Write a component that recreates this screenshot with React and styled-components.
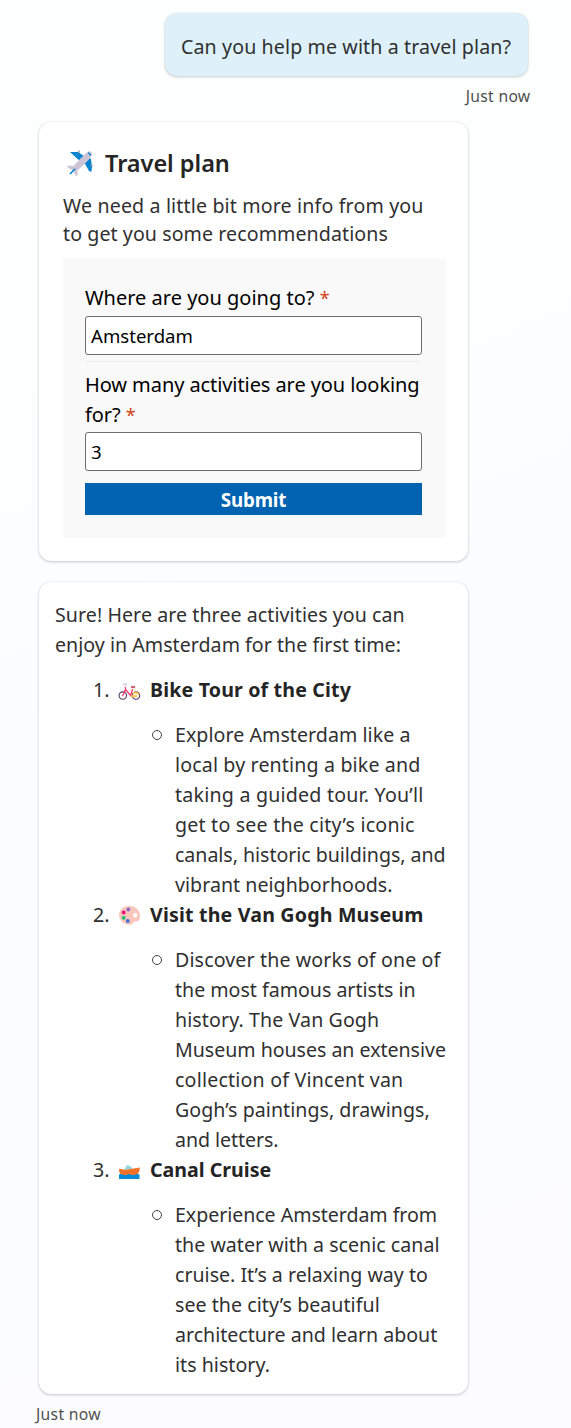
import React from "react";
import styled, { createGlobalStyle } from "styled-components";

const GlobalStyle = createGlobalStyle`
  *, *::before, *::after { box-sizing: border-box; }
  body {
    margin: 0;
    font-family: "Noto Sans", "Open Sans", sans-serif;
    color: #303030;
  }
`;

const Chat = styled.main`
  width: 571px;
  height: 1428px;
  overflow: hidden;
  padding: 13px 0 0 39px;
  display: flex;
  flex-direction: column;
  align-items: flex-start;
  background: linear-gradient(160deg, #fdfffe 0%, #fdfefe 22%, #fbfcfe 50%, #fcfcff 100%);
`;

const Bubble = styled.div`
  align-self: flex-end;
  width: 363px;
  height: 63px;
  margin-right: 43.5px;
  padding: 19px 0 0 16.5px;
  border-radius: 12px;
  background: #def1fb;
  box-shadow: 0 1px 3px rgba(0, 0, 0, 0.2), 0 0 1px rgba(0, 0, 0, 0.12);
`;

const Line = styled.span`
  display: block;
  white-space: nowrap;
  font-size: ${(p) => p.$size || 19.6}px;
  line-height: ${(p) => p.$lh || 30}px;
  letter-spacing: ${(p) => p.$ls || 0}px;
`;

const Timestamp = styled.time`
  font-size: 15.7px;
  line-height: 22px;
  letter-spacing: 0.3px;
  color: #505050;
  white-space: nowrap;
`;

const SentTime = styled(Timestamp)`
  align-self: flex-end;
  margin: 9px 40.5px 15px 0;
`;

const ReceivedTime = styled(Timestamp)`
  margin: 9px 0 0 -3px;
`;

const Card = styled.section`
  width: 429px;
  border-radius: 12px;
  background: #fff;
  box-shadow: 0 1px 3px rgba(0, 0, 0, 0.2), 0 0 1px rgba(0, 0, 0, 0.16);
`;

const FormCard = styled(Card)`
  height: 439px;
  padding: 24px 24px 0 24px;
`;

const AnswerCard = styled(Card)`
  height: 812px;
  margin-top: 21px;
  padding: 18px 0 0 16px;
`;

const CardTitle = styled.h2`
  display: flex;
  align-items: center;
  gap: 12px;
  height: 35px;
  margin: 0 0 11px;
  padding-left: 4px;
  font-size: 23.5px;
  font-weight: 600;
  line-height: 35px;
  letter-spacing: -0.03px;
  color: #242424;
`;

const Panel = styled.form`
  width: 382px;
  height: 279px;
  margin-top: 11px;
  padding: 24px 23px 0 22px;
  background: #f9f9f9;
`;

const Field = styled.label`
  display: block;
  color: #000;
`;

const Required = styled.span`
  color: #d13f17;
  font-size: 18px;
`;

const Input = styled.input`
  display: block;
  width: 337px;
  height: 39px;
  margin-top: ${(p) => p.$gap}px;
  padding: 0 5px 1px;
  border: 1px solid #6e6e6e;
  border-radius: 3px;
  background: #fff;
  color: #000;
  font-family: inherit;
  font-size: 18.6px;
  outline: none;
`;

const Divider = styled.div`
  height: 1px;
  margin: 6px 0 8px;
  background: #f0f0f0;
`;

const Submit = styled.button`
  display: block;
  width: 337px;
  height: 32px;
  margin-top: 12px;
  padding: 2px 0 0;
  border: 0;
  background: #0063b1;
  color: #fff;
  font-family: inherit;
  font-size: 18.8px;
  font-weight: 700;
  line-height: 30px;
  letter-spacing: -0.15px;
`;

const Activities = styled.ol`
  margin: 15px 0 0;
  padding: 0;
  list-style: none;
`;

const ActivityHead = styled.div`
  display: flex;
  align-items: center;
  height: 30px;
  padding-left: 38px;
  margin-bottom: 15px;
`;

const Ordinal = styled.span`
  width: 25px;
  font-size: 19.6px;
  line-height: 30px;
`;

const Name = styled.strong`
  margin-left: 9px;
  font-size: 19.6px;
  line-height: 30px;
  letter-spacing: ${(p) => p.$ls}px;
  white-space: nowrap;
  color: #242424;
`;

const Detail = styled.div`
  display: flex;
  gap: 13px;
  padding-left: 97px;
`;

const Ring = styled.span`
  flex: none;
  width: 10px;
  height: 10px;
  margin-top: 10px;
  border: 1px solid #404040;
  border-radius: 50%;
`;

const Icon = styled.svg`
  flex: none;
  display: block;
`;

const Plane = () => (
  <Icon width="26" height="28" viewBox="0 0 26 28">
    <path d="M3 2 11 2 20 8 15 13ZM24 9l1 8-.7 5-2.3-1-5-9 4-5Z" fill="#0384cf" />
    <path d="M12 2.3v-1M24 15.5h1" stroke="#9b91ab" strokeWidth="1.6" strokeLinecap="round" />
    <path d="M20.5 2C22.5.5 25 1.3 25 3.8 25 7 20.5 11.5 10.5 20.5L10.5 25 8.8 26 6.5 21 0 17 1.5 15.5 6.5 16C13 9 17.5 4 20.5 2Z" fill="#cdc4d6" />
    <path d="m3.5 23.5 4.2-4.2" stroke="#0384cf" strokeWidth="1.6" strokeLinecap="round" />
    <path d="m21.5 3 2 2" stroke="#0b86cf" strokeWidth="1.4" strokeLinecap="round" />
  </Icon>
);

const Bike = () => (
  <Icon width="23" height="22" viewBox="0 -2 23 22">
    <g fill="none" strokeLinecap="round">
      <circle cx="4.8" cy="14.6" r="3.7" stroke="#533566" strokeWidth="1.1" />
      <circle cx="18" cy="14.6" r="3.7" stroke="#533566" strokeWidth="1.1" />
      <path d="m13.5 15 5 .2M15.5 12l2.5-.5 2.5 1.5" stroke="#fcc550" strokeWidth="2" />
      <path d="M4.8 14.6 7.5 8.5 12.5 14.500 14.5 8.5M7.3 6.5 7.7 9.5" stroke="#f5356f" strokeWidth="1.3" />
      <path d="M5.5 3.5 8 2.5V5" stroke="#cfc5d5" strokeWidth="1.1" />
      <path d="M13.5 6h3" stroke="#b92d3d" strokeWidth="1.5" />
    </g>
  </Icon>
);

const Palette = () => (
  <Icon width="23" height="22" viewBox="0 -0.5 23 22">
    <path fillRule="evenodd" d="M11 1.5C17 1.3 22 5.5 22 11c0 4-1.5 6.500-4 6-2-.3-2.5.8-3.5 2-1.6 2-5 1.4-7.5.2C3.5 17.500 1 14 1 10.5 1 5.5 5.5 1.7 11 1.5ZM17.3 8.5a2.2 2.2 0 1 0 0 4.4 2.2 2.2 0 0 0 0-4.4Z" fill="#fac5ba" />
    <circle cx="10.3" cy="5" r="1.9" fill="#8b6bc4" />
    <circle cx="5.7" cy="8" r="1.9" fill="#f30b78" />
    <circle cx="5.7" cy="13.3" r="1.9" fill="#13c276" />
    <circle cx="9.8" cy="16.5" r="1.9" fill="#3f72dd" />
  </Icon>
);

const Boat = () => (
  <Icon width="23" height="22" viewBox="0 -2 23 22">
    <path d="m6 9 2.5-4.5C10.5 3.7 12.5 5 15 8.5Z" fill="#91d8df" />
    <path d="M1 7.8 7.5 8.800 22 6.5c-.3 3.5-1.5 6-3.5 8.5H3.5C2 13 1 11 1 7.8Z" fill="#ff7426" />
    <path d="M1.5 10.5 8 11.5l13-2" fill="none" stroke="#cf633b" strokeWidth="0.8" />
    <path d="M1 13.5q2-1 4 0t4 0 4 0 4 0 4.5 0V18H1Z" fill="#0789d8" />
  </Icon>
);

const activities = [
  {
    name: "Bike Tour of the City", ls: 0.16, Art: Bike,
    lines: [
      ["Explore Amsterdam like a", 0.05],
      ["local by renting a bike and", 0.15],
      ["taking a guided tour. You’ll", 0.22],
      ["get to see the city’s iconic", 0.21],
      ["canals, historic buildings, and", -0.04],
      ["vibrant neighborhoods.", 0.03],
    ],
  },
  {
    name: "Visit the Van Gogh Museum", ls: 0.18, Art: Palette,
    lines: [
      ["Discover the works of one of", 0.13],
      ["the most famous artists in", -0.01],
      ["history. The Van Gogh", 0.1],
      ["Museum houses an extensive", -0.03],
      ["collection of Vincent van", 0.2],
      ["Gogh’s paintings, drawings,", 0.04],
      ["and letters.", -0.06],
    ],
  },
  {
    name: "Canal Cruise", ls: 0, Art: Boat,
    lines: [
      ["Experience Amsterdam from", -0.05],
      ["the water with a scenic canal", 0.02],
      ["cruise. It’s a relaxing way to", 0],
      ["see the city’s beautiful", 0.04],
      ["architecture and learn about", -0.01],
      ["its history.", 0.03],
    ],
  },
];

export default function App() {
  return (
    <>
      <GlobalStyle />
      <Chat>
        <Bubble>
          <Line $ls={0.12}>Can you help me with a travel plan?</Line>
        </Bubble>
        <SentTime>Just now</SentTime>

        <FormCard>
          <CardTitle><Plane />Travel plan</CardTitle>
          <Line $lh={28} $ls={0.15}>We need a little bit more info from you</Line>
          <Line $lh={28} $ls={0.08}>to get you some recommendations</Line>
          <Panel onSubmit={(e) => e.preventDefault()}>
            <Field>
              <Line $size={20}>Where are you going to? <Required>*</Required></Line>
              <Input $gap={3} defaultValue="Amsterdam" />
            </Field>
            <Divider />
            <Field>
              <Line $size={20} $ls={-0.08}>How many activities are you looking</Line>
              <Line $size={20} $ls={-0.1}>for? <Required>*</Required></Line>
              <Input $gap={2} defaultValue="3" />
            </Field>
            <Submit>Submit</Submit>
          </Panel>
        </FormCard>

        <AnswerCard>
          <Line $ls={0.07}>Sure! Here are three activities you can</Line>
          <Line $ls={0.03}>enjoy in Amsterdam for the first time:</Line>
          <Activities>
            {activities.map(({ name, ls, Art, lines }, i) => (
              <li key={name}>
                <ActivityHead>
                  <Ordinal>{i + 1}.</Ordinal>
                  <Art />
                  <Name $ls={ls}>{name}</Name>
                </ActivityHead>
                <Detail>
                  <Ring />
                  <div>
                    {lines.map(([text, spacing]) => (
                      <Line key={text} $ls={spacing}>{text}</Line>
                    ))}
                  </div>
                </Detail>
              </li>
            ))}
          </Activities>
        </AnswerCard>
        <ReceivedTime>Just now</ReceivedTime>
      </Chat>
    </>
  );
}
